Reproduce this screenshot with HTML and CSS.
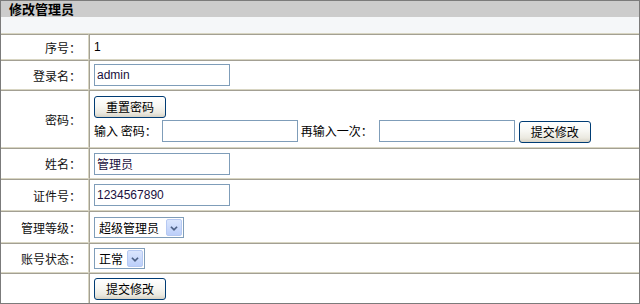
FILE: index.html
```html
<!DOCTYPE html>
<html lang="zh-CN">
<head>
<meta charset="utf-8">
<title>修改管理员</title>
<link rel="stylesheet" href="styles.css">
</head>
<body>
<div class="panel">
  <div class="panel-title">修改管理员</div>
  <div class="panel-band"></div>
  <table class="form-table">
    <tr class="h24">
      <td class="label">序号：</td>
      <td class="value">1</td>
    </tr>
    <tr class="h28">
      <td class="label">登录名：</td>
      <td class="value"><input class="text-input" type="text" value="admin"></td>
    </tr>
    <tr class="h56">
      <td class="label">密码：</td>
      <td class="value">
        <div class="pwd-block">
          <button class="btn" type="button">重置密码</button>
          <div class="pwd-line">
            <span class="pwd-label">输入 密码：</span>
            <input class="text-input pwd1" type="password">
            <span class="pwd-label again">再输入一次：</span>
            <input class="text-input pwd2" type="password">
            <button class="btn submit-inline" type="button">提交修改</button>
          </div>
        </div>
      </td>
    </tr>
    <tr class="h29">
      <td class="label">姓名：</td>
      <td class="value"><input class="text-input" type="text" value="管理员"></td>
    </tr>
    <tr class="h30">
      <td class="label">证件号：</td>
      <td class="value"><input class="text-input" type="text" value="1234567890"></td>
    </tr>
    <tr class="h30">
      <td class="label">管理等级：</td>
      <td class="value">
        <span class="select-box">
          <select class="select-native level"><option>超级管理员</option><option>普通管理员</option></select>
          <span class="select-arrow"><svg width="16" height="17" viewBox="0 0 16 17"><path d="M4.5 6.5 L8 10 L11.5 6.5" fill="none" stroke="#4d6185" stroke-width="2"/></svg></span>
        </span>
      </td>
    </tr>
    <tr class="h28">
      <td class="label">账号状态：</td>
      <td class="value">
        <span class="select-box">
          <select class="select-native status"><option>正常</option><option>禁用</option></select>
          <span class="select-arrow"><svg width="16" height="17" viewBox="0 0 16 17"><path d="M4.5 6.5 L8 10 L11.5 6.5" fill="none" stroke="#4d6185" stroke-width="2"/></svg></span>
        </span>
      </td>
    </tr>
    <tr class="h29 last">
      <td class="label"></td>
      <td class="value"><button class="btn" type="button">提交修改</button></td>
    </tr>
  </table>
</div>
</body>
</html>
```
FILE: styles.css
```css
html, body {
  margin: 0;
  padding: 0;
  background: #ffffff;
}
body {
  font-family: "Liberation Sans", "Noto Sans CJK SC", sans-serif;
  font-size: 12px;
  color: #000;
}
.panel {
  width: 640px;
  height: 304px;
  box-sizing: border-box;
  border: 1px solid #7b7b7b;
  overflow: hidden;
}
.panel-title {
  height: 16px;
  line-height: 16px;
  background: #cccccc;
  font-size: 13px;
  font-weight: bold;
  padding-left: 8px;
  font-family: "Noto Sans CJK SC", sans-serif;
}
.panel-band {
  height: 16px;
  background: #f5f7f9;
  border-bottom: 1px solid #d8d5c2;
}
.form-table {
  width: 100%;
  border-collapse: separate;
  border-spacing: 0;
  table-layout: fixed;
}
.form-table td {
  border-top: 1px solid #a3a093;
  border-bottom: 1px solid #d8d5c2;
  padding: 0;
  vertical-align: middle;
  white-space: nowrap;
}
.form-table tr.last td {
  border-bottom: none;
}
.h24 td { height: 24px; }
.h28 td { height: 28px; }
.h29 td { height: 29px; }
.h30 td { height: 30px; }
.h56 td { height: 56px; }
.label {
  width: 80px;
  padding-right: 7px !important;
  text-align: right;
  border-right: 1px solid #d8d5c2;
  font-family: "Noto Sans CJK SC", sans-serif;
  color: #111;
}
.value {
  padding-left: 4px !important;
  border-left: 1px solid #a3a093;
}
.text-input {
  box-sizing: border-box;
  width: 136px;
  height: 22px;
  border: 1px solid #7f9db9;
  padding: 0 2px;
  margin: 0;
  font-family: "Liberation Sans", "Noto Sans CJK SC", sans-serif;
  font-size: 12px;
  color: #1a1040;
  vertical-align: middle;
  outline: none;
}
.btn {
  box-sizing: border-box;
  width: 72px;
  height: 22px;
  margin: 0;
  padding: 0;
  border: 1px solid #003c74;
  border-radius: 3px;
  background: linear-gradient(#ffffff 0%, #f7f7f3 45%, #ebe9e0 80%, #d6d2c5 100%);
  font-family: "Noto Sans CJK SC", sans-serif;
  font-size: 12px;
  color: #000;
  vertical-align: middle;
}
.pwd-block {
  display: flex;
  flex-direction: column;
  align-items: flex-start;
  gap: 1px;
}
.pwd-line {
  display: flex;
  align-items: center;
}
.pwd-label {
  font-family: "Noto Sans CJK SC", sans-serif;
  white-space: pre;
}
.pwd1 { margin-left: 5px; }
.again { margin-left: 3px; }
.pwd2 { margin-left: 6px; }
.submit-inline { margin-left: 4px; margin-top: 2px; }
.select-box {
  display: inline-flex;
  align-items: stretch;
  box-sizing: border-box;
  height: 21px;
  border: 1px solid #7f9db9;
  padding: 1px;
  vertical-align: middle;
  background: #fff;
}
.select-native {
  appearance: none;
  -webkit-appearance: none;
  border: none;
  outline: none;
  background: transparent;
  margin: 0;
  padding: 0 0 0 3px;
  font-family: "Noto Sans CJK SC", sans-serif;
  font-size: 12px;
  color: #000;
  box-sizing: border-box;
}
.select-native.level { width: 70px; }
.select-native.status { width: 31px; }
.select-arrow {
  display: flex;
  width: 16px;
  box-sizing: border-box;
  border: 1px solid #b6c9f2;
  border-radius: 2px;
  background: linear-gradient(#dbe6fd, #bccffa);
}
.select-arrow svg {
  display: block;
  margin: auto;
}
```
